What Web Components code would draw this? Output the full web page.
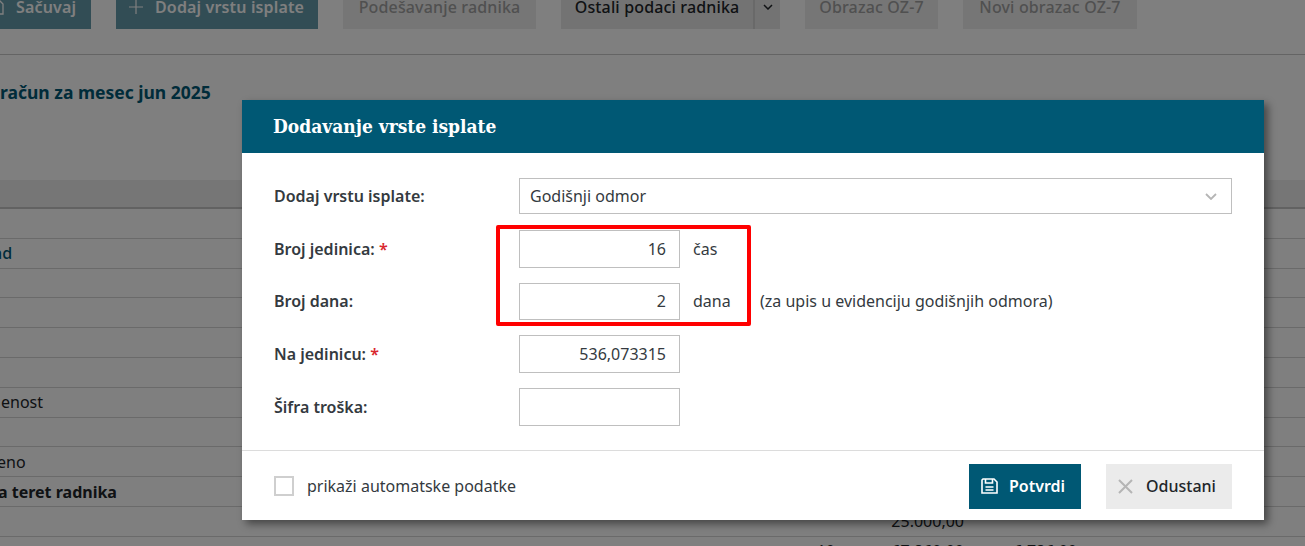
<!DOCTYPE html>
<html lang="sr">
<head>
<meta charset="utf-8">
<title>Dodavanje vrste isplate</title>
<style>
  html, body { margin: 0; height: 100%; overflow: hidden; background: #fff; font-family: "Noto Sans", sans-serif; }
</style>
</head>
<body>
<pay-page>
  <tool-bar slot="toolbar"></tool-bar>
  <pay-table slot="table"></pay-table>
  <pay-modal slot="modal"></pay-modal>
</pay-page>

<script>
// Stranica iza modala, sa tamnim slojem preko nje
class PayPage extends HTMLElement {
  constructor() {
    super();
    this.attachShadow({ mode: "open" });
    this.shadowRoot.innerHTML = `
      <style>
        :host { display: block; position: relative; width: 1305px; height: 546px; overflow: hidden; background: #fff; color: #212529; }
        .line { height: 1px; background: #c9c9c9; margin-top: 25px; }
        h2 { margin: 25px 0 0; height: 24px; font-size: 17.500px; line-height: 24px; font-weight: 700; color: #005874; white-space: nowrap; }
        .space { height: 76px; }
        .overlay { position: absolute; inset: 0; background: rgba(0,0,0,.5); }
        .center { position: absolute; left: 242px; top: 100px; }
      </style>
      <slot name="toolbar"></slot>
      <div class="line"></div>
      <h2>račun za mesec jun 2025</h2>
      <div class="space"></div>
      <slot name="table"></slot>
      <div class="overlay"></div>
      <div class="center"><slot name="modal"></slot></div>
    `;
  }
}

class ToolBar extends HTMLElement {
  constructor() {
    super();
    this.attachShadow({ mode: "open" });
    this.shadowRoot.innerHTML = `
      <style>
        :host { display: flex; gap: 25px; height: 29px; font-size: 16px; font-weight: 600; line-height: 14px; letter-spacing: .15px; }
        .btn { display: flex; align-items: center; justify-content: center; height: 29px; padding-bottom: 15px; box-sizing: border-box; background: #ededed; color: #a0a0a0; white-space: nowrap; font-weight: 500; }
        .main { background: #005874; color: #fff; opacity: .6; font-weight: 600; justify-content: flex-start; }
        .save { width: 91px; }
        .save svg { margin: 0 12px 0 -11px; }
        .add { width: 202px; padding-left: 13px; }
        .add svg { margin-right: 12px; }
        .w1 { width: 193px; }
        .w2 { width: 133px; }
        .w3 { width: 174px; }
        .split { display: flex; height: 29px; background: #e7e7e7; color: #212529; font-weight: 500; }
        .split .txt { width: 194px; display: flex; align-items: center; justify-content: center; padding-bottom: 15px; box-sizing: border-box; white-space: nowrap; border-right: 2px solid #d2d2d2; }
        .split .arr { width: 25px; display: flex; align-items: center; justify-content: center; padding-bottom: 15px; box-sizing: border-box; }
      </style>
      <div class="btn main save">
        <svg width="15" height="15" viewBox="0 0 15 15" fill="none" stroke="#fff" stroke-width="1.3"><path d="M1 1h10l3 3v10H1z"/><path d="M4 1v3h5V1M4 9h7M4 11.500h7"/></svg>
        <span>Sačuvaj</span>
      </div>
      <div class="btn main add">
        <svg width="14" height="14" viewBox="0 0 14 14" fill="none" stroke="#fff" stroke-width="1.2"><path d="M7 0v14M0 7h14"/></svg>
        <span>Dodaj vrstu isplate</span>
      </div>
      <div class="btn w1">Podešavanje radnika</div>
      <div class="split">
        <div class="txt">Ostali podaci radnika</div>
        <div class="arr"><svg width="10" height="6" viewBox="0 0 10 6" fill="none" stroke="#212529" stroke-width="1.500"><path d="M1 1l4 4 4-4"/></svg></div>
      </div>
      <div class="btn w2">Obrazac OZ-7</div>
      <div class="btn w3">Novi obrazac OZ-7</div>
    `;
  }
}

class PayRow extends HTMLElement {
  constructor() {
    super();
    this.attachShadow({ mode: "open" });
    this.shadowRoot.innerHTML = `
      <style>
        :host { display: flex; align-items: center; box-sizing: border-box; height: 29.800px; border-bottom: 1px solid #d4d4d4; font-size: 16px; color: #212529; white-space: nowrap; }
        :host([kind="link"]) { color: #005874; font-weight: 500; }
        :host([kind="bold"]) { font-weight: 700; }
      </style>
      <slot></slot>
    `;
  }
}

class PayTable extends HTMLElement {
  constructor() {
    super();
    this.attachShadow({ mode: "open" });
    this.shadowRoot.innerHTML = `
      <style>
        :host { display: block; }
        .head { height: 27px; background: #ededed; border-bottom: 2px solid #c4c4c4; }
        .a { margin-left: -7px; }
        .b { margin-left: -3px; }
        .c { margin-left: -2px; }
        .d { margin-left: 1px; }
        .nums { display: grid; grid-template-columns: 835px 129px 113px; box-sizing: border-box; height: 29.800px; border-bottom: 1px solid #d4d4d4; font-size: 16px; line-height: 29px; text-align: right; color: #212529; }
      </style>
      <div class="head"></div>
      <pay-row></pay-row>
      <pay-row kind="link"><span class="a">ad</span></pay-row>
      <pay-row></pay-row>
      <pay-row></pay-row>
      <pay-row></pay-row>
      <pay-row></pay-row>
      <pay-row><span class="d">enost</span></pay-row>
      <pay-row></pay-row>
      <pay-row><span class="b">eno</span></pay-row>
      <pay-row kind="bold"><span class="c">a teret radnika</span></pay-row>
      <div class="nums"><span></span><span>25.000,00</span><span></span></div>
      <div class="nums"><span>10</span><span>67.860,00</span><span>6.786,00</span></div>
    `;
  }
}

// Red forme: labela levo, polje desno
class FormRow extends HTMLElement {
  constructor() {
    super();
    this.attachShadow({ mode: "open" });
    this.shadowRoot.innerHTML = `
      <style>
        :host { display: flex; align-items: center; font-size: 16px; color: #343a40; }
        label { width: 245px; font-weight: 600; }
        b { color: #d9272e; font-weight: 600; }
        .field { display: flex; align-items: center; flex: 1; }
      </style>
      <label></label>
      <div class="field"><slot></slot></div>
    `;
  }
  connectedCallback() {
    const label = this.shadowRoot.querySelector("label");
    label.textContent = this.getAttribute("label");
    if (this.hasAttribute("required")) {
      label.append(" ");
      label.appendChild(document.createElement("b")).textContent = "*";
    }
  }
}

class NumBox extends HTMLElement {
  constructor() {
    super();
    this.attachShadow({ mode: "open" });
    this.shadowRoot.innerHTML = `
      <style>
        :host { display: flex; align-items: center; justify-content: flex-end; box-sizing: border-box; width: 161px; height: 37.670px; padding-right: 13px; background: #fff; border: 1px solid #bfbfbf; font-size: 16px; color: #343a40; }
      </style>
      <slot></slot>
    `;
  }
}

class PayModal extends HTMLElement {
  constructor() {
    super();
    this.attachShadow({ mode: "open" });
    this.shadowRoot.innerHTML = `
      <style>
        :host { display: flex; flex-direction: column; box-sizing: border-box; width: 1022px; height: 420px; background: #fff; box-shadow: 4px 4px 8px rgba(0,0,0,.45); font-family: "Noto Sans", sans-serif; color: #343a40; }
        header { height: 51px; display: flex; align-items: center; padding: 0 0 2px 31px; background: #005874; color: #fff; font: 700 19px "DejaVu Serif Condensed", "DejaVu Serif", serif; flex: none; }
        .body { flex: 1; display: flex; flex-direction: column; padding: 25px 32px 0; position: relative; }
        .select { display: flex; align-items: center; justify-content: space-between; box-sizing: border-box; width: 713px; height: 36px; padding: 0 14px 0 10px; border: 1px solid #bfbfbf; font-size: 16px; }
        .unit { margin-left: 13px; font-size: 16px; }
        .u1 { width: 67px; }
        .hint { font-size: 16px; }
        .r1 { margin-bottom: 16px; }
        .r2, .r3, .r4 { margin-bottom: 15px; }
        .mark { position: absolute; left: 254px; top: 72px; width: 255px; height: 101px; box-sizing: border-box; border: 4px solid #ff0000; border-radius: 2px; }
        footer { flex: none; height: 68px; padding-top: 1px; display: flex; align-items: center; padding-left: 32px; padding-right: 32px; border-top: 1px solid #dcdcdc; font-size: 16px; }
        .check { width: 20px; height: 20px; box-sizing: border-box; border: 2px solid #cfcfcf; margin-right: 13px; }
        .right { margin-left: auto; display: flex; gap: 25px; }
        .ok, .no { display: flex; align-items: center; height: 45px; box-sizing: border-box; padding-left: 12px; font-weight: 600; }
        .ok { width: 112px; gap: 11px; background: #005874; color: #fff; }
        .no { width: 126px; gap: 13px; background: #ebebeb; color: #212529; font-weight: 500; }
      </style>
      <header>Dodavanje vrste isplate</header>
      <div class="body">
        <form-row class="r1" label="Dodaj vrstu isplate:">
          <div class="select">
            <span>Godišnji odmor</span>
            <svg width="12" height="7" viewBox="0 0 12 7" fill="none" stroke="#b5b5b5" stroke-width="1.800"><path d="M1 1l5 5 5-5"/></svg>
          </div>
        </form-row>
        <form-row class="r2" label="Broj jedinica:" required>
          <num-box>16</num-box><span class="unit">čas</span>
        </form-row>
        <form-row class="r3" label="Broj dana:">
          <num-box>2</num-box><span class="unit u1">dana</span><span class="hint">(za upis u evidenciju godišnjih odmora)</span>
        </form-row>
        <form-row class="r4" label="Na jedinicu:" required>
          <num-box>536,073315</num-box>
        </form-row>
        <form-row label="Šifra troška:">
          <num-box></num-box>
        </form-row>
        <div class="mark"></div>
      </div>
      <footer>
        <span class="check"></span>
        <span>prikaži automatske podatke</span>
        <div class="right">
          <div class="ok">
            <svg width="17" height="16" viewBox="0 0 17 16" fill="none" stroke="#fff" stroke-width="1.600"><path d="M2 1h11l3 3v11H1V2z"/><path d="M4.500 1v4h7V1M4.500 9h8M4.500 12h8"/></svg>
            <span>Potvrdi</span>
          </div>
          <div class="no">
            <svg width="15" height="15" viewBox="0 0 15 15" fill="none" stroke="#b5b5b5" stroke-width="2"><path d="M1 1l13 13M14 1L1 14"/></svg>
            <span>Odustani</span>
          </div>
        </div>
      </footer>
    `;
  }
}

customElements.define("pay-page", PayPage);
customElements.define("tool-bar", ToolBar);
customElements.define("pay-row", PayRow);
customElements.define("pay-table", PayTable);
customElements.define("form-row", FormRow);
customElements.define("num-box", NumBox);
customElements.define("pay-modal", PayModal);
</script>
</body>
</html>
